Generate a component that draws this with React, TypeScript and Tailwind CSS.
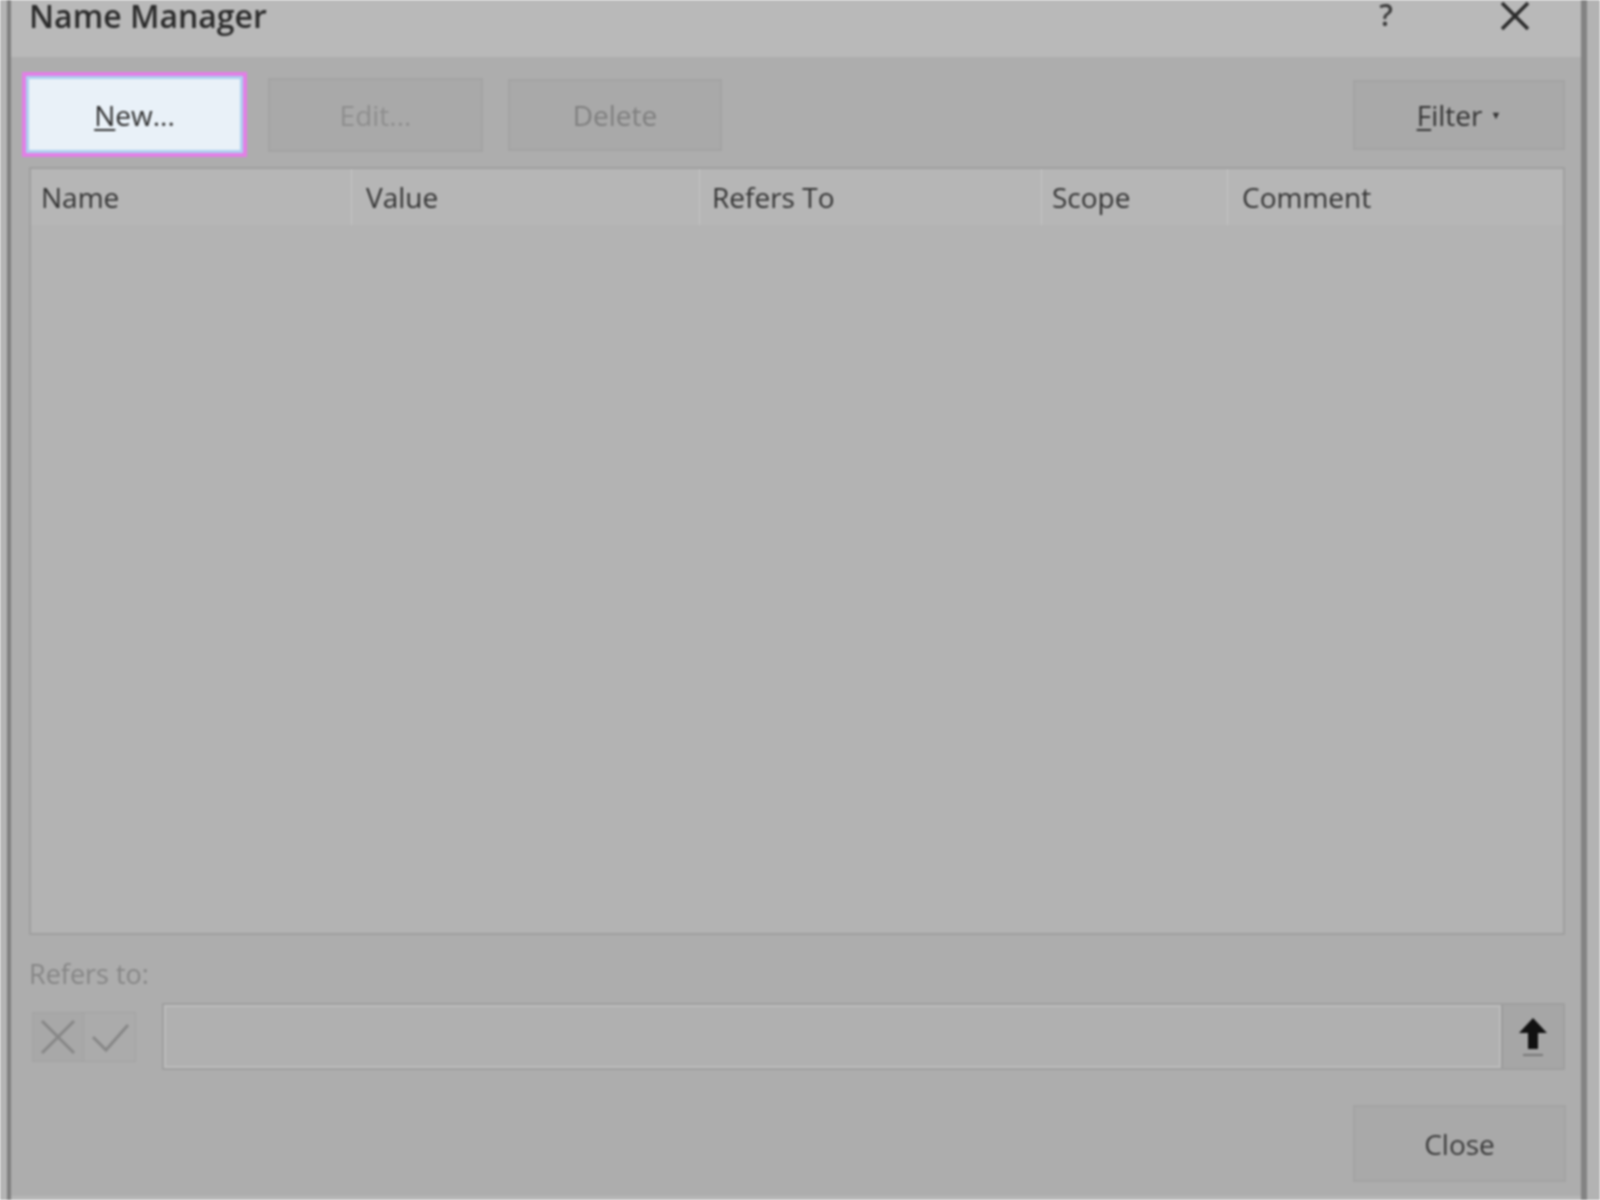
import React from "react";

const font = { fontFamily: '"Open Sans", "Noto Sans", "Liberation Sans", sans-serif' };

function Btn({
  children,
  className = "",
  textClass = "",
}: {
  children: React.ReactNode;
  className?: string;
  textClass?: string;
}) {
  return (
    <div
      className={`flex items-center justify-center border-2 border-[#a3a3a3] bg-[#a9a9a9] ${className}`}
    >
      <span className={`text-[28px] leading-none flex items-center ${textClass}`}>{children}</span>
    </div>
  );
}

export default function App() {
  return (
    <div
      className="w-[1600px] h-[1200px] overflow-hidden bg-[#adadad] flex blur-[1px]"
      style={font}
    >
      {/* left outer strip + border */}
      <div className="w-[7px] h-full bg-[#b4b4b4]" />
      <div className="w-[4px] h-full bg-[#7f7f7f]" />

      {/* dialog */}
      <div className="flex-1 h-full flex flex-col bg-[#adadad]">
        {/* title bar */}
        <div className="h-[57px] bg-[#b9b9b9] flex items-start shrink-0">
          <div className="pl-[18px] text-[32px] font-semibold leading-none text-[#2b2b2b]">
            Name Manager
          </div>
          <div className="ml-auto flex items-start pr-[50px]">
            <span className="text-[30px] font-semibold leading-none text-[#3a3a3a] mr-[106px]">?</span>
            <svg width="32" height="32" viewBox="0 0 32 32" className="mt-[0px]">
              <path d="M3 3 L29 29 M29 3 L3 29" stroke="#2a2a2a" strokeWidth="3.5" />
            </svg>
          </div>
        </div>

        {/* button row */}
        <div className="flex items-center mt-[15px] pl-[11px] pr-[16px] h-[85px] shrink-0">
          <div className="w-[225px] h-[85px] border-[4px] border-[#e27fe6] bg-[#dfe6ee] p-0 flex">
            <div className="flex-1 border-[3px] border-[#aed0ef] bg-[#e9f1f8] flex items-center justify-center">
              <span className="text-[28px] font-medium leading-none text-[#2f2f2f]">
                <span className="underline underline-offset-[3px]">N</span>ew...
              </span>
            </div>
          </div>
          <Btn className="ml-[21px] w-[215px] h-[74px]" textClass="text-[#8e8e8e]">
            Edit...
          </Btn>
          <Btn className="ml-[25px] w-[214px] h-[72px]" textClass="text-[#7f7f7f] font-medium">
            Delete
          </Btn>
          <Btn className="ml-auto w-[212px] h-[70px]" textClass="text-[#333] font-medium">
            <span className="underline underline-offset-[3px]">F</span>ilter
            <span className="text-[11px] ml-[8px]">▼</span>
          </Btn>
        </div>

        {/* list */}
        <div className="mt-[10px] ml-[18px] mr-[16px] h-[768px] border-2 border-[#9f9f9f] bg-[#b3b3b3] flex flex-col shrink-0">
          <div className="h-[56px] flex items-center text-[28px] font-medium text-[#333] bg-[#b6b6b6]">
            <div className="w-[320px] pl-[10px]">Name</div>
            <div className="w-[348px] h-full flex items-center border-l border-[#c4c4c4] pl-[14px]">Value</div>
            <div className="w-[342px] h-full flex items-center border-l border-[#c4c4c4] pl-[12px]">Refers To</div>
            <div className="w-[186px] h-full flex items-center border-l border-[#c4c4c4] pl-[10px]">Scope</div>
            <div className="flex-1 h-full flex items-center border-l border-[#c4c4c4] pl-[14px]">Comment</div>
          </div>
          <div className="flex-1" />
        </div>

        {/* refers to label */}
        <div className="ml-[18px] mt-[25px] text-[27px] leading-none text-[#868686]">Refers to:</div>

        {/* refers to row */}
        <div className="flex items-center ml-[18px] mr-[16px] mt-[16px] h-[67px]">
          <div className="flex ml-[3px] h-[50px] border border-[#a2a2a2]">
            <div className="w-[50px] h-full flex items-center justify-center bg-[#a8a8a8]">
              <svg width="40" height="40" viewBox="0 0 40 40">
                <path d="M4 4 L36 36 M36 4 L4 36" stroke="#878787" strokeWidth="3" />
              </svg>
            </div>
            <div className="w-[52px] h-full flex items-center justify-center bg-[#ababab] border-l border-[#a2a2a2]">
              <svg width="40" height="40" viewBox="0 0 40 40">
                <path d="M3 20 L16 33 L38 8" stroke="#878787" strokeWidth="3" fill="none" />
              </svg>
            </div>
          </div>
          <div className="ml-[26px] flex-1 h-[67px] border-2 border-[#9f9f9f] bg-[#b0b0b0] flex">
            <div className="flex-1 border-2 border-[#bdbdbd]" />
            <div className="w-[62px] h-full flex items-center justify-center bg-[#a6a6a6] border-l-2 border-[#9a9a9a]">
              <svg width="36" height="44" viewBox="0 0 36 44">
                <path d="M18 3 L32 18 L23 18 L23 34 L13 34 L13 18 L4 18 Z" fill="#111" />
                <path d="M8 40 L28 40" stroke="#777" strokeWidth="2" />
              </svg>
            </div>
          </div>
        </div>

        {/* close */}
        <div className="flex justify-end mr-[15px] mt-[35px]">
          <Btn className="w-[213px] h-[77px]" textClass="text-[#3a3a3a] font-medium">
            Close
          </Btn>
        </div>

        <div className="flex-1" />
        <div className="h-[4px] bg-[#b6b6b6]" />
      </div>

      {/* right border + outer strip */}
      <div className="w-[6px] h-full bg-[#838383]" />
      <div className="w-[13px] h-full bg-[#b3b3b3]" />
    </div>
  );
}
